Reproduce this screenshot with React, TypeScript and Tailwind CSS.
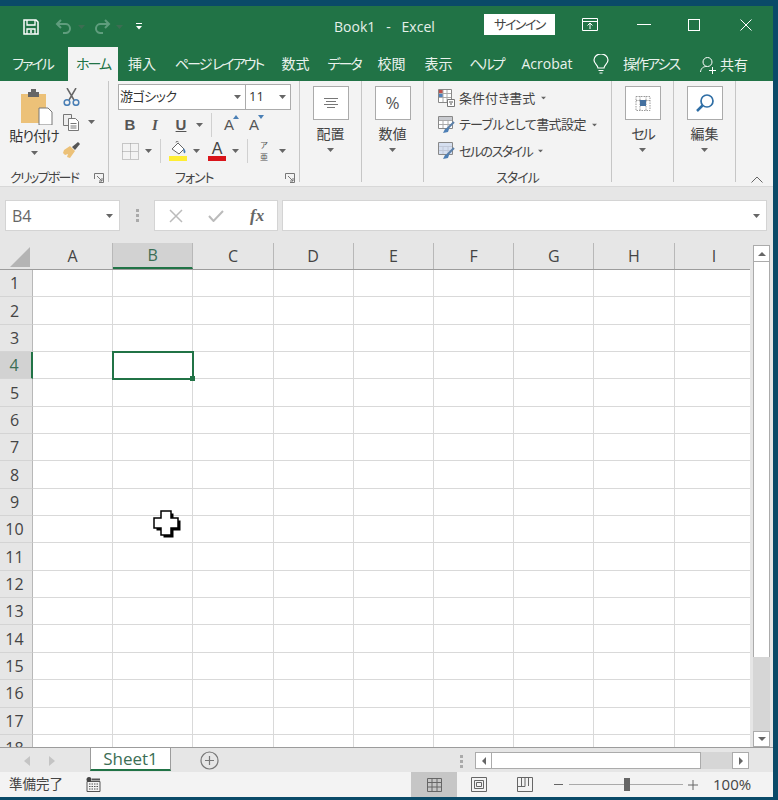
import React from 'react';

const columns = ['A', 'B', 'C', 'D', 'E', 'F', 'G', 'H', 'I'];
const rows = Array.from({ length: 18 }, (_, i) => i + 1);

const Caret = ({ className = '' }: { className?: string }) => (
  <svg width="7" height="4" viewBox="0 0 7 4" className={`shrink-0 ${className}`}>
    <path d="M0 0h7L3.5 4z" fill="#666" />
  </svg>
);

const Launcher = ({ className = '' }: { className?: string }) => (
  <svg width="10" height="10" viewBox="0 0 10 10" className={className} fill="none" stroke="#777">
    <path d="M.5 6V.5H9.500V9.500H5" />
    <path d="M3 3l5 5M8 5v3H5" />
  </svg>
);

const SaveIcon = () => (
  <svg width="16" height="16" viewBox="0 0 16 16" fill="none" stroke="#fff" strokeWidth="1.5">
    <path d="M1 1h12l2 2v12H1z" />
    <path d="M4 1v5h8V1M4 15v-5h8v5" strokeWidth="1.300" />
    <path d="M8 11v3" />
  </svg>
);

const UndoIcon = ({ flip = false }: { flip?: boolean }) => (
  <svg width="17" height="15" viewBox="0 0 17 15" fill="none" stroke="#5f9d7d" strokeWidth="2" className={flip ? '-scale-x-100' : ''}>
    <path d="M6 1L2 5l4 4" />
    <path d="M2 5h8a4.500 4.500 0 0 1 1 9H8" />
  </svg>
);

const RibbonBox = ({ children, label, labelClass = '' }: { children: React.ReactNode; label: string; labelClass?: string }) => (
  <div className="flex flex-col items-center w-full pt-[5px]">
    <div className="w-[36px] h-[34px] bg-white border border-[#ababab] flex items-center justify-center">{children}</div>
    <span className={`text-[14px] leading-[20px] mt-[4px] text-[#444] ${labelClass}`}>{label}</span>
    <Caret className="mt-[4px]" />
  </div>
);

const StyleRow = ({ label, kind, labelClass = '' }: { label: string; kind: number; labelClass?: string }) => (
  <div className="flex items-center h-[26.500px]">
    <svg width="18" height="18" viewBox="0 0 18 18" fill="none" className="shrink-0">
      {kind === 0 ? (
        <>
          <path d="M.5.5h13v13H.5z" fill="#fff" stroke="#888" />
          <path d="M1 1h4v3H1z" fill="#c0504d" />
          <path d="M1 5h4v3H1z" fill="#4f81bd" />
          <path d="M5 1v12M9 1v12M1 4.500h12M1 8.500h12" stroke="#aaa" />
          <path d="M9.500 10.500h7v7h-7z" fill="#fff" stroke="#777" />
          <path d="M11 13h4M12 15h2" stroke="#555" />
        </>
      ) : (
        <>
          <path d="M.5.500h14v12H.5z" fill={kind === 1 ? '#fff' : '#d5dff0'} stroke="#888" />
          <path d="M1 4.500h13M1 8.500h13M5 1v11M10 1v11" stroke={kind === 1 ? '#aaa' : '#c0c8d8'} />
          <path d="M1 1h13v3H1z" fill={kind === 1 ? '#c9cbd0' : '#d5dff0'} />
          <path d="M16 6l-7 7" stroke="#5a7fa8" strokeWidth="2" />
          <path d="M10 12l-3 1-2 4 5-1 1-3z" fill="#4d7fb5" />
        </>
      )}
    </svg>
    <span className={`ml-[3px] text-[13px] text-[#444] whitespace-nowrap ${labelClass}`}>{label}</span>
    <Caret className="ml-[5px] scale-75" />
  </div>
);

const TitleBar = () => (
  <div className="h-[41px] flex items-center bg-[#217346] text-white shrink-0">
    <div className="ml-[23px] flex"><SaveIcon /></div>
    <div className="ml-[16px] flex"><UndoIcon /></div>
    <Caret className="ml-[6px] opacity-40" />
    <div className="ml-[9px] flex"><UndoIcon flip /></div>
    <Caret className="ml-[5px] opacity-40" />
    <svg width="6" height="7" viewBox="0 0 6 7" className="ml-[13px]" fill="#fff">
      <path d="M0 0h6v1H0zM0 3h6L3 6.500z" />
    </svg>
    <span className="ml-[192px] w-[100px] text-[14px] text-[#e6f0ea] whitespace-pre">Book1   -   Excel</span>
    <div className="ml-[50px] w-[71px] h-[21px] -mt-[4px] bg-white text-[#444] text-[13px] tracking-[-1.500px] flex items-center justify-center">サインイン</div>
    <svg width="16" height="13" viewBox="0 0 16 13" fill="none" stroke="#fff" className="ml-[27px] -mt-[4px]">
      <path d="M.5.500h15v12H.5zM1 3.500h14" />
      <path d="M8 11V5M5.500 7.500L8 5l2.500 2.500" />
    </svg>
    <div className="ml-[39px] w-[14px] h-[1.500px] bg-white -mt-[4px]" />
    <div className="ml-[37px] w-[12px] h-[12px] border border-white -mt-[4px]" />
    <svg width="12" height="12" viewBox="0 0 12 12" stroke="#fff" className="ml-[40px] -mt-[4px]">
      <path d="M.5.500l11 11M11.500.500l-11 11" />
    </svg>
  </div>
);

const Tab = ({ label, w, active = false, kana = false }: { label: string; w: number; active?: boolean; kana?: boolean }) => (
  <div
    style={{ width: w }}
    className={`h-full flex items-center justify-center whitespace-pre text-[14px] pb-[2px] ${kana ? 'tracking-[-2px]' : ''} ${active ? 'bg-[#f3f3f3] text-[#217346]' : 'text-[#e9f2ed]'}`}
  >
    {label}
  </div>
);

const TabBar = () => (
  <div className="h-[34px] flex items-stretch bg-[#217346] shrink-0">
    <Tab label="ファイル" w={65} kana />
    <div className="w-[3px]" />
    <Tab label="ホーム" w={50} active kana />
    <Tab label="挿入" w={48} />
    <Tab label="ページ レイアウト" w={106} kana />
    <Tab label="数式" w={47} />
    <Tab label="データ" w={50} kana />
    <Tab label="校閲" w={45} />
    <Tab label="表示" w={49} />
    <Tab label="ヘルプ" w={47} kana />
    <Tab label="Acrobat" w={74} />
    <div className="w-[34px] flex items-center justify-center">
      <svg width="16" height="20" viewBox="0 0 16 20" fill="none" stroke="#fff" strokeWidth="1.200">
        <path d="M5 14c0-3-4-4-4-8a7 6 0 0 1 14 0c0 4-4 5-4 8z" />
        <path d="M5.500 16.500h5M6.500 19h3" />
      </svg>
    </div>
    <div className="w-[82px] pl-[5px] pb-[2px] flex items-center text-[14px] tracking-[-2px] text-[#e9f2ed] whitespace-nowrap overflow-hidden">操作アシス</div>
    <div className="flex items-center text-[14px] text-[#e9f2ed]">
      <svg width="17" height="17" viewBox="0 0 17 17" fill="none" stroke="#fff" className="mt-[2px]">
        <circle cx="7.500" cy="5" r="4.500" />
        <path d="M.5 15c.5-4 3-5.500 6-5.500M12.500 10v7M9 13.500h7" />
      </svg>
      <span className="ml-[3px] mt-[1px]">共有</span>
    </div>
  </div>
);

const ClipboardGroup = () => (
  <div className="w-[109px] shrink-0 flex flex-col border-r border-[#c6c6c6] mb-[4px]">
    <div className="flex flex-1 min-h-0">
      <div className="w-[62px] flex flex-col items-center pt-[8px] pl-[6px]">
        <svg width="32" height="36" viewBox="0 0 32 36" className="ml-[6px]">
          <path d="M0 5h25v29H0z" fill="#ecc178" />
          <path d="M7 3h11v5H7z" fill="#666" />
          <path d="M10 0h5v4h-5z" fill="#666" />
          <path d="M18 19h9l4 4v13H18z" fill="#fff" stroke="#777" />
        </svg>
        <span className="text-[14px] leading-[20px] text-[#333] mt-[1px] tracking-[-1px] whitespace-nowrap">貼り付け</span>
        <Caret className="mt-[5px]" />
      </div>
      <div className="flex flex-col pt-[7px] pl-[1px]">
        <svg width="17" height="18" viewBox="0 0 17 18" fill="none">
          <path d="M4 0l7 12M13 0L6 12" stroke="#666" strokeWidth="1.500" />
          <circle cx="4" cy="14.500" r="2.800" stroke="#4a7fb5" strokeWidth="1.500" />
          <circle cx="13" cy="14.500" r="2.800" stroke="#4a7fb5" strokeWidth="1.500" />
        </svg>
        <div className="flex items-center mt-[7px]">
          <svg width="18" height="18" viewBox="0 0 18 18" fill="none" stroke="#777">
            <path d="M.5 1.500h8v11h-8z" fill="#eee" />
            <path d="M5.500 5.500h7l3 3v9h-10z" fill="#fff" />
            <path d="M7.500 10.500h6M7.500 13h6M7.500 15h6" />
          </svg>
          <Caret className="ml-[7px]" />
        </div>
        <svg width="17" height="17" viewBox="0 0 17 17" className="mt-[11px]">
          <path d="M1 8l6-4 5 5-5 7-3-1 1-3-3 1-2-2z" fill="#ecc178" />
          <path d="M9 5l6-5 2 2-5 6z" fill="#555" />
        </svg>
      </div>
    </div>
    <div className="h-[18px] -mb-[5px] flex items-center pl-[10px]">
      <span className="text-[13px] tracking-[-1.700px] text-[#444] whitespace-nowrap">クリップボード</span>
      <Launcher className="ml-auto mr-[4px]" />
    </div>
  </div>
);

const VDivider = ({ h = 22, className = '' }: { h?: number; className?: string }) => (
  <div style={{ height: h }} className={`w-px bg-[#d0d0d0] shrink-0 ${className}`} />
);

const FontGroup = () => (
  <div className="w-[191px] shrink-0 flex flex-col border-r border-[#c6c6c6] mb-[4px] pt-[3px]">
    <div className="ml-[9px] w-[173px] h-[26px] flex bg-white border border-[#ababab]">
      <div className="w-[127px] flex items-center border-r border-[#ababab] pl-[1px]">
        <span className="text-[13px] tracking-[-0.500px] text-[#333]">游ゴシック</span>
        <Caret className="ml-auto mr-[4px]" />
      </div>
      <div className="flex-1 flex items-center pl-[3px]">
        <span className="text-[13px] text-[#333]">11</span>
        <Caret className="ml-auto mr-[4px]" />
      </div>
    </div>
    <div className="h-[26px] mt-[2px] flex items-center text-[#555] text-[15px]">
      <span className="w-[42px] text-center font-bold font-['Liberation_Sans',sans-serif]">B</span>
      <span className="ml-[-11px] w-[30px] text-center font-bold italic font-['Liberation_Serif',serif]">I</span>
      <span className="w-[22px] text-center font-bold underline font-['Liberation_Sans',sans-serif]">U</span>
      <Caret className="ml-[4px]" />
      <VDivider h={24} className="ml-[8px]" />
      <span className="ml-[12px] text-[15px] relative font-['Liberation_Sans',sans-serif]">
        A
        <svg width="6" height="4" viewBox="0 0 6 4" className="absolute -right-[5px] top-[1px]"><path d="M0 4h6L3 0z" fill="#4a7fb5" /></svg>
      </span>
      <span className="ml-[15px] text-[15px] relative font-['Liberation_Sans',sans-serif]">
        A
        <svg width="6" height="4" viewBox="0 0 6 4" className="absolute -right-[5px] top-[1px]"><path d="M0 0h6L3 4z" fill="#4a7fb5" /></svg>
      </span>
    </div>
    <div className="h-[26px] flex items-center">
      <svg width="17" height="17" viewBox="0 0 17 17" className="ml-[13px]" fill="none" stroke="#999" strokeDasharray="1 1">
        <path d="M.5.500h16v16H.5zM8.500.500v16M.5 8.500h16" />
      </svg>
      <Caret className="ml-[6px]" />
      <VDivider h={24} className="ml-[8px]" />
      <div className="ml-[8px] flex flex-col items-center">
        <svg width="18" height="15" viewBox="0 0 18 15" fill="none">
          <path d="M3 8l6-6 6 6-5 5z" fill="#fff" stroke="#666" />
          <path d="M7 1.500C7 0 9 0 9.500 1" stroke="#666" />
          <path d="M14.500 7c2 2 2.500 4 1.500 5s-2-1-1.500-5z" fill="#4a7fb5" />
        </svg>
        <div className="w-[18px] h-[5px] bg-[#ffee33]" />
      </div>
      <Caret className="ml-[6px]" />
      <div className="ml-[8px] flex flex-col items-center w-[18px]">
        <span className="text-[16px] leading-[15px] text-[#444] font-['Liberation_Sans',sans-serif]">A</span>
        <div className="w-[18px] h-[5px] bg-[#d9141a]" />
      </div>
      <Caret className="ml-[6px]" />
      <VDivider h={24} className="ml-[8px]" />
      <div className="ml-[10px] w-[12px] flex flex-col items-center text-[#555] text-[8px] leading-[12px]">
        <span>ア</span>
        <span>亜</span>
      </div>
      <Caret className="ml-[9px]" />
    </div>
    <div className="mt-auto h-[18px] -mb-[5px] flex items-center">
      <span className="ml-[66px] text-[13px] tracking-[-1px] text-[#444] whitespace-nowrap">フォント</span>
      <Launcher className="ml-auto mr-[4px]" />
    </div>
  </div>
);

const StylesGroup = () => (
  <div className="w-[188px] shrink-0 flex flex-col border-r border-[#c6c6c6] mb-[4px] pl-[14px] pt-[4px]">
    <StyleRow kind={0} label="条件付き書式" />
    <StyleRow kind={1} label="テーブルとして書式設定" labelClass="tracking-[-0.600px]" />
    <StyleRow kind={2} label="セルのスタイル" labelClass="tracking-[-1.500px]" />
    <div className="mt-auto h-[18px] -mb-[5px] flex items-center justify-center pr-[14px]">
      <span className="text-[13px] tracking-[-1px] text-[#444]">スタイル</span>
    </div>
  </div>
);

const Ribbon = () => (
  <div className="h-[106px] flex bg-[#f3f3f3] shrink-0 border-b border-[#d8d8d8] relative">
    <ClipboardGroup />
    <FontGroup />
    <div className="w-[62px] shrink-0 border-r border-[#c6c6c6] mb-[4px]">
      <RibbonBox label="配置">
        <svg width="16" height="10" viewBox="0 0 16 10" stroke="#777"><path d="M1 .5h14M3 3.500h10M1 6.500h14M4 9.500h8" /></svg>
      </RibbonBox>
    </div>
    <div className="w-[62px] shrink-0 border-r border-[#c6c6c6] mb-[4px]">
      <RibbonBox label="数値">
        <span className="text-[17px] text-[#555]">%</span>
      </RibbonBox>
    </div>
    <StylesGroup />
    <div className="w-[62px] shrink-0 border-r border-[#c6c6c6] mb-[4px]">
      <RibbonBox label="セル" labelClass="tracking-[-2px]">
        <svg width="18" height="20" viewBox="0 0 18 20" fill="none" stroke="#999" strokeDasharray="1.500 1">
          <path d="M2 3.500h14v14H2zM2 7.500h14M6 3v15M12 3v15" />
          <path d="M6 7h6v6H6z" fill="#44709f" stroke="none" />
        </svg>
      </RibbonBox>
    </div>
    <div className="w-[62px] shrink-0 border-r border-[#c6c6c6] mb-[4px]">
      <RibbonBox label="編集">
        <svg width="20" height="20" viewBox="0 0 20 20" fill="none" stroke="#2f6ea5" strokeWidth="1.700">
          <circle cx="12" cy="8" r="6" />
          <path d="M7.500 12.500L2 18" strokeWidth="2.500" />
        </svg>
      </RibbonBox>
    </div>
    <svg width="12" height="7" viewBox="0 0 12 7" fill="none" stroke="#666" className="absolute right-[10px] bottom-[3px]">
      <path d="M.5 6.500L6 1l5.500 5.500" />
    </svg>
  </div>
);

const FormulaBar = () => (
  <div className="h-[56px] flex items-start bg-[#e6e6e6] shrink-0 pt-[13px] pl-[5px]">
    <div className="w-[115px] h-[31px] bg-white border border-[#d4d4d4] flex items-center pl-[6px] pr-[6px]">
      <span className="text-[16px] text-[#666]">B4</span>
      <Caret className="ml-auto" />
    </div>
    <div className="w-[34px] h-[31px] flex flex-col items-center justify-center gap-[2px]">
      <div className="w-[3px] h-[3px] bg-[#aaa]" />
      <div className="w-[3px] h-[3px] bg-[#aaa]" />
      <div className="w-[3px] h-[3px] bg-[#aaa]" />
    </div>
    <div className="w-[124px] h-[31px] bg-white border border-[#d4d4d4] flex items-center justify-around pl-[1px]">
      <svg width="14" height="14" viewBox="0 0 14 14" stroke="#bbb" strokeWidth="1.500"><path d="M1 1l12 12M13 1L1 13" /></svg>
      <svg width="16" height="12" viewBox="0 0 16 12" fill="none" stroke="#bbb" strokeWidth="2"><path d="M1 6l4.500 5L15 1" /></svg>
      <span className="text-[17px] italic font-bold text-[#666] font-['Liberation_Serif',serif]">fx</span>
    </div>
    <div className="ml-[4px] w-[485px] h-[31px] bg-white border border-[#d4d4d4] flex items-center pr-[6px]">
      <Caret className="ml-auto" />
    </div>
  </div>
);

const CellGrid = () => (
  <div className="flex-1 min-w-0 overflow-hidden relative bg-white">
    <div className="h-[27px] flex bg-[#e6e6e6] border-b border-[#9c9c9c]">
      <div className="w-[33px] shrink-0 flex items-end justify-end pr-[3px] pb-[2px]">
        <svg width="20" height="20" viewBox="0 0 20 20"><path d="M20 0v20H0z" fill="#b4b4b4" /></svg>
      </div>
      {columns.map((c) => (
        <div
          key={c}
          className={`w-[80.200px] shrink-0 flex items-center justify-center text-[16px] border-r border-[#b8b8b8] ${
            c === 'B' ? 'bg-[#d2d2d2] text-[#3c6e55] border-b-2 border-b-[#217346]' : 'text-[#444]'
          }`}
        >
          {c}
        </div>
      ))}
    </div>
    {rows.map((r) => (
      <div key={r} className="h-[27.350px] flex">
        <div
          className={`w-[33px] shrink-0 flex items-center justify-center pr-[3px] text-[16px] border-b border-[#d4d4d4] ${
            r === 4 ? 'bg-[#d2d2d2] text-[#3c6e55] border-r-2 border-r-[#217346]' : 'bg-[#e6e6e6] text-[#444] border-r border-r-[#b8b8b8]'
          }`}
        >
          {r}
        </div>
        {columns.map((c) => (
          <div key={c} className="w-[80.200px] shrink-0 border-r border-b border-[#d9d9d9]" />
        ))}
      </div>
    ))}
    <div className="absolute left-[112px] top-[108px] w-[82px] h-[29px] border-2 border-[#217346]">
      <div className="absolute -right-[3px] -bottom-[3px] w-[5px] h-[5px] bg-[#217346]" />
    </div>
    <svg width="28" height="28" viewBox="0 0 28 28" className="absolute left-[153px] top-[267px]">
      <path d="M10.500 3.500h10v7h7v10h-7v7h-10v-7h-7v-10h7z" fill="#000" />
      <path d="M8 1h10v7h7v10h-7v7H8v-7H1V8h7z" fill="#fff" stroke="#000" strokeWidth="1.500" />
    </svg>
  </div>
);

const ScrollButton = ({ d, className = '' }: { d: string; className?: string }) => (
  <div className={`flex items-center justify-center bg-white border border-[#ababab] shrink-0 ${className}`}>
    <svg width="10" height="10" viewBox="0 0 10 10"><path d={d} fill="#666" /></svg>
  </div>
);

const VerticalScroll = () => (
  <div className="w-[23px] shrink-0 bg-[#e6e6e6] flex flex-col items-center pt-[2px]">
    <ScrollButton d="M1 7h8L5 3z" className="w-[17px] h-[17px]" />
    <div className="w-[17px] h-[395px] bg-white border-x border-[#ababab] shrink-0" />
    <div className="w-[17px] flex-1 bg-[#d6d6d6]" />
    <ScrollButton d="M1 3h8L5 7z" className="w-[17px] h-[16px]" />
  </div>
);

const SheetTabs = () => (
  <div className="h-[25px] flex items-start bg-[#e6e6e6] border-t border-[#9c9c9c] shrink-0">
    <svg width="7" height="10" viewBox="0 0 7 10" className="ml-[24px] mt-[8px]"><path d="M6 0v10L0 5z" fill="#c4c4c4" /></svg>
    <svg width="7" height="10" viewBox="0 0 7 10" className="ml-[18px] mt-[8px]"><path d="M0 0v10l6-5z" fill="#c4c4c4" /></svg>
    <div className="ml-[34px] w-[81px] h-[23px] bg-white border-x border-[#9c9c9c] border-b-2 border-b-[#217346] flex items-center justify-center text-[17px] text-[#3c6e55]">
      Sheet1
    </div>
    <svg width="19" height="19" viewBox="0 0 19 19" fill="none" stroke="#777" strokeWidth="1.200" className="ml-[29px] mt-[3px]">
      <circle cx="9.500" cy="9.500" r="8.500" />
      <path d="M9.500 5v9M5 9.500h9" />
    </svg>
    <div className="ml-[241px] mt-[7px] flex flex-col gap-[2px]">
      <div className="w-[3px] h-[3px] bg-[#aaa]" />
      <div className="w-[3px] h-[3px] bg-[#aaa]" />
      <div className="w-[3px] h-[3px] bg-[#aaa]" />
    </div>
    <div className="ml-[12px] mt-[4px] w-[274px] h-[17px] flex bg-[#d6d6d6]">
      <ScrollButton d="M7 1v8L3 5z" className="w-[17px] h-[17px]" />
      <div className="w-[209px] h-[17px] bg-white border-y border-r border-[#ababab]" />
      <ScrollButton d="M3 1v8l4-4z" className="w-[17px] h-[17px] ml-auto" />
    </div>
  </div>
);

const StatusBar = () => (
  <div className="h-[25px] flex items-stretch bg-[#f3f3f3] shrink-0 text-[14px] text-[#444]">
    <span className="ml-[9px] w-[63px] self-center whitespace-nowrap text-[13.500px]">準備完了</span>
    <svg width="15" height="15" viewBox="0 0 15 15" className="ml-[14px] self-center" fill="none" stroke="#555">
      <path d="M1 4.500h13v10H1z" />
      <path d="M3 7h9M3 9.500h9M3 12h9" strokeDasharray="1.500 1" />
      <circle cx="3" cy="2.500" r="2.500" fill="#444" stroke="none" />
      <path d="M6 2.500h8" strokeWidth="2" />
    </svg>
    <div className="ml-[310px] w-[46px] bg-[#c6c6c6] flex items-center justify-center">
      <svg width="15" height="14" viewBox="0 0 15 14" fill="none" stroke="#666"><path d="M.5.500h14v13H.5zM.5 4.500h14M.5 9h14M5 .5v13M10 .5v13" /></svg>
    </div>
    <svg width="16" height="15" viewBox="0 0 16 15" fill="none" stroke="#666" className="ml-[14px] self-center">
      <path d="M.5.500h15v14H.5zM3.500 3.500h9v8h-9z" />
      <path d="M5.500 5.500h5v4h-5z" />
    </svg>
    <svg width="16" height="15" viewBox="0 0 16 15" fill="none" stroke="#666" className="ml-[30px] self-center">
      <path d="M.5.500h15v14H.5zM.5 9.500h7.500V.5M4.500.500v9M11.500.500V9" />
    </svg>
    <div className="ml-[21px] w-[9px] h-[1.500px] bg-[#666] self-center" />
    <div className="ml-[6px] w-[114px] self-center h-[7px] flex items-center relative">
      <div className="w-full h-px bg-[#aaa]" />
      <div className="absolute left-[55px] top-[-3px] w-[6px] h-[13px] bg-[#666]" />
    </div>
    <svg width="10" height="10" viewBox="0 0 10 10" stroke="#666" className="ml-[5px] self-center"><path d="M5 0v10M0 5h10" /></svg>
    <span className="ml-[15px] self-center text-[15px]">100%</span>
  </div>
);

export default function App() {
  return (
    <div className="w-[778px] h-[800px] overflow-hidden bg-[#0a4a68] pt-[6px] pb-[3px] font-['Open_Sans','Noto_Sans_CJK_JP',sans-serif] [font-feature-settings:'palt']">
      <div className="w-[773px] h-full flex flex-col bg-[#e6e6e6]">
        <TitleBar />
        <TabBar />
        <Ribbon />
        <FormulaBar />
        <div className="flex-1 min-h-0 flex">
          <CellGrid />
          <VerticalScroll />
        </div>
        <SheetTabs />
        <StatusBar />
      </div>
    </div>
  );
}
